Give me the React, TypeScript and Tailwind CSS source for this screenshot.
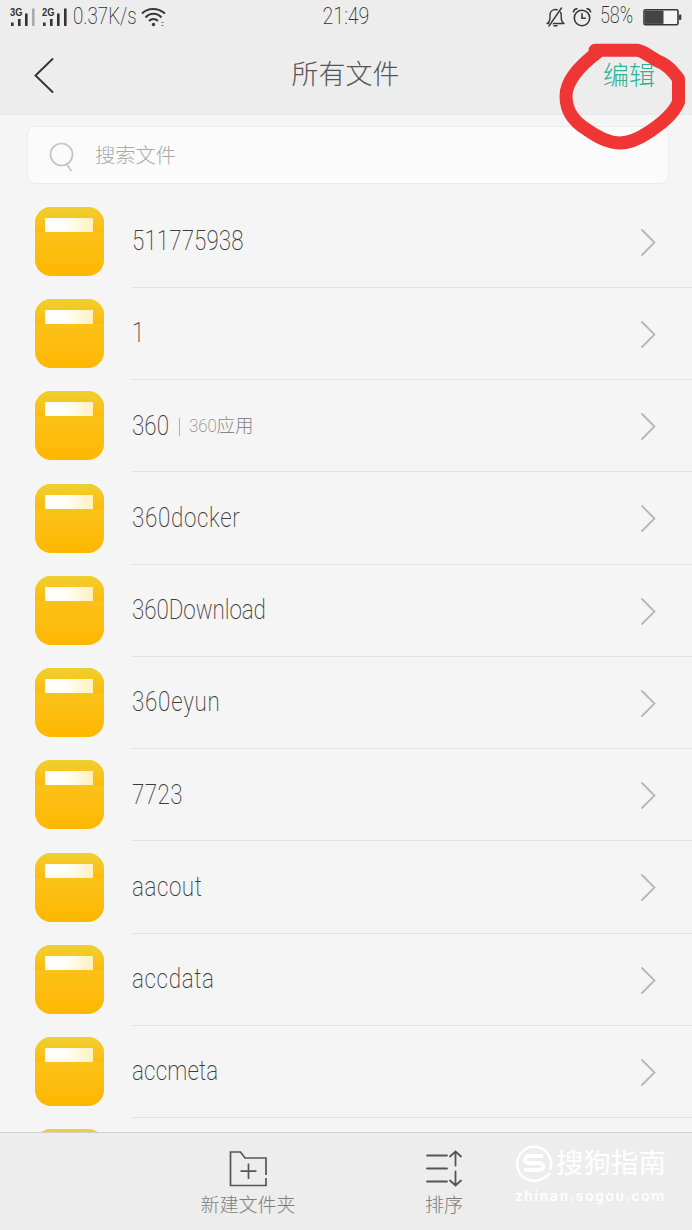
import { clsx } from 'clsx';

type FileEntry = {
  name: string;
  label?: string;
  spacing: string;
};

const files: FileEntry[] = [
  { name: '511775938', spacing: 'tracking-[0.100px]' },
  { name: '1', spacing: 'tracking-normal' },
  { name: '360', label: '360应用', spacing: 'tracking-normal' },
  { name: '360docker', spacing: 'tracking-[0.800px]' },
  { name: '360Download', spacing: 'tracking-[-0.100px]' },
  { name: '360eyun', spacing: 'tracking-[0.900px]' },
  { name: '7723', spacing: 'tracking-[0.500px]' },
  { name: 'aacout', spacing: 'tracking-[0.700px]' },
  { name: 'accdata', spacing: 'tracking-[0.800px]' },
  { name: 'accmeta', spacing: 'tracking-[0.200px]' },
];

function SignalBars({ label, weak }: { label: string; weak?: boolean }) {
  return (
    <svg width="26" height="20" viewBox="0 0 26 20" fill="#333">
      <text x="0" y="7.6" fontSize="10" fontWeight="700" fontFamily="Liberation Sans, sans-serif" textLength="12.5" lengthAdjust="spacingAndGlyphs">{label}</text>
      <rect x="1" y="14.5" width="2.6" height="3.5" />
      <rect x="8" y="11" width="2.6" height="7" />
      <rect x="15" y="5.5" width="2.6" height="12.5" />
      <rect x="22" y="0.5" width="2.6" height="17.5" fill={weak ? '#aaa' : '#333'} />
    </svg>
  );
}

function StatusBar() {
  return (
    <div className="flex h-[34px] items-start justify-between px-[10px] text-[#303030]">
      <div className="flex w-[220px] items-start pt-2">
        <SignalBars label="3G" weak />
        <span className="w-[6px]" />
        <SignalBars label="2G" />
        <span className="mt-[-5px] ml-[5px] w-[67px] origin-left scale-x-[0.815] whitespace-nowrap text-[23px] leading-7 font-extralight">0.37K/s</span>
        <svg className="ml-px" width="25" height="20" viewBox="0 0 25 20" fill="none" stroke="#383838" strokeWidth="2">
          <path d="M1 5.5C7-.5 17-.5 24 5.500M4.500 9.500C9 4.500 16 4.500 20.500 9.500M8 13C10.500 10.300 14.500 10.300 17 13" />
          <circle cx="12.5" cy="16.500" r="1.700" fill="#383838" stroke="none" />
          <path d="M20 14.500h3M20 17.500h3" strokeWidth="1" stroke="#999" />
        </svg>
      </div>
      <span className="w-[64px] origin-center scale-x-[0.85] text-center text-[23px] leading-[34px] font-extralight">21:49</span>
      <div className="flex w-[220px] items-start justify-end pt-[7px]">
        <svg width="19" height="20" viewBox="0 0 19 20" fill="none" stroke="#383838" strokeWidth="1.4" strokeLinecap="round" strokeLinejoin="round">
          <path d="M1 16.500h17c-2-1.300-2.800-3-2.800-6V8C15.200 4.500 12.500 2.500 9.500 2.500S4 4.500 4 8v2.500c0 3-.8 4.700-3 6Z" />
          <path d="M8 18.700h3" />
          <path d="M14.500 1.500 3.500 19" stroke="#ededed" strokeWidth="3" />
          <path d="M15.500 1 3 19" />
        </svg>
        <svg className="ml-[7px]" width="20" height="20" viewBox="0 0 20 20" fill="none" stroke="#383838" strokeWidth="1.6" strokeLinecap="round">
          <circle cx="10" cy="11" r="7.700" />
          <path d="M10 6.800V11.300h3.300M1.500 4.800Q2 2 5 1.800M18.500 4.800Q18 2 15 1.800" />
        </svg>
        <span className="mt-[-5px] ml-[8px] w-[35px] origin-left scale-x-[0.78] whitespace-nowrap text-[23px] leading-7 font-extralight">58%</span>
        <svg className="mt-[1px] ml-[8px]" width="39" height="18" viewBox="0 0 39 18">
          <rect x="1" y="1.700" width="34" height="15" rx="1.500" fill="#f5f5f5" stroke="#383838" strokeWidth="1.600" />
          <rect x="2" y="2.500" width="18.500" height="13.400" fill="#444" />
          <rect x="36" y="6.500" width="2.300" height="5.500" rx="1" fill="#383838" />
        </svg>
      </div>
    </div>
  );
}

function Header() {
  return (
    <header className="relative h-[115px] shrink-0 border-b border-[#e8e8e8] bg-[#ededed]">
      <StatusBar />
      <div className="flex h-[80px] items-center justify-between pr-[37px] pl-[34px]">
        <svg className="mt-[2px]" width="52" height="36" viewBox="0 0 52 36" fill="none" stroke="#333" strokeWidth="1.900" strokeLinecap="round">
          <path d="M18.500 2 1.500 18.500 18.500 35" />
        </svg>
        <h1 className="mt-[2px] ml-[2px] text-[27px] font-light text-[#555]">所有文件</h1>
        <button className="mt-[5px] text-[26px] font-extralight text-[#32b194]">编辑</button>
      </div>
      {/* hand-drawn marker around the edit button */}
      <svg className="pointer-events-none absolute top-0 left-0 z-10" width="692" height="160" viewBox="0 0 692 160" fill="none">
        <path d="M595 50.300H638C646 52 652 59 662 63C670 67 674 73 678.500 79V102C673 115 661 124 649 132C637 140 628 143 620 143C610 143 597 137 586 129C573 121 566 111 566 96C566 82 579 66 598 52" stroke="#f03535" strokeWidth="13" strokeLinecap="round" strokeLinejoin="round" />
      </svg>
    </header>
  );
}

function SearchBox() {
  return (
    <div className="mt-[11px] mr-[23px] ml-[27px] flex h-[58px] shrink-0 items-center rounded-lg border border-[#ebebeb] bg-[#fbfbfb] pl-[21px]">
      <svg className="mt-[3px]" width="26" height="30" viewBox="0 0 26 30" fill="none" stroke="#c4c4c4" strokeWidth="1.700" strokeLinecap="round">
        <circle cx="12.500" cy="12.500" r="11" />
        <path d="m17.500 22 4.500 6.500" />
      </svg>
      <span className="ml-[20px] pt-[2px] text-[20.300px] font-extralight text-[#aaa]">搜索文件</span>
    </div>
  );
}

function FolderIcon() {
  return (
    <div className="h-[69px] w-[69px] shrink-0 overflow-hidden rounded-[16px] bg-linear-to-b from-[#f8c820] to-[#ffb700]">
      <div className="flex h-[25px] items-end justify-center bg-linear-to-b from-[#efd02f] to-[#ffb908]">
        <div className="mr-px h-[14px] w-[48px] bg-linear-to-r from-white via-[#fffdf2] to-[#fff0bd]" />
      </div>
    </div>
  );
}

function FileRow({ file }: { file: FileEntry }) {
  return (
    <li className="flex h-[92.250px] shrink-0 pl-[35px]">
      <div className="mt-[11.400px]">
        <FolderIcon />
      </div>
      <div className="ml-[28px] flex flex-1 items-center justify-between border-b border-[#e1e1e1] pr-[36px]">
        <div className="flex items-center">
          <span className={clsx('inline-block origin-left scale-x-[0.8] whitespace-nowrap text-[28px] leading-8 font-extralight text-[#3c3c3c]', file.spacing, file.label && 'w-[38px]')}>{file.name}</span>
          {file.label && (
            <>
              <span className="mt-[2px] ml-[9px] h-[18px] w-px bg-[#b0b0b0]" />
              <span className="mt-[2px] ml-[9px] flex items-center text-[18.500px] font-extralight text-[#888]">
                <span className="w-[27.500px] origin-left scale-x-[0.89] text-[19px]">360</span>应用
              </span>
            </>
          )}
        </div>
        <svg className="mt-px" width="16" height="28" viewBox="0 0 16 28" fill="none" stroke="#b6b6b6" strokeWidth="1.800" strokeLinecap="round">
          <path d="M2 2l12.500 12.500L2 27" />
        </svg>
      </div>
    </li>
  );
}

function Toolbar() {
  return (
    <footer className="flex h-[98px] shrink-0 border-t border-[#cfcfcf] bg-[#ededed] text-[19px] font-extralight text-[#7c7c7c]">
      <div className="ml-[148px] flex w-[200px] flex-col items-center pt-[17px]">
        <svg width="38" height="37" viewBox="0 0 38 37" fill="none" stroke="#555" strokeWidth="1.700">
          <path d="M37 25V8H16L11.500 2H1.500V35.500H37V28M19.500 13.500V29M11.500 21.200H27.500" />
        </svg>
        <span className="mt-[5px] leading-7">新建文件夹</span>
      </div>
      <div className="ml-[46px] flex w-[100px] flex-col items-center pt-[17px]">
        <svg className="-ml-[2px]" width="37" height="37" viewBox="0 0 37 37" fill="none" stroke="#555" strokeWidth="1.800" strokeLinecap="round">
          <path d="M2 5.500H22M2 18.500H22M2 31.500H22M30.500 15.500V2M25 6.500 30.500 1.500 36 6.500M30.500 21.500V35M25 30.500 30.500 35.500 36 30.500" />
        </svg>
        <span className="mt-[5px] leading-7">排序</span>
      </div>
      <div className="ml-[21px] pt-[11px] text-white">
        <div className="flex h-[38px] items-center">
          <svg width="38" height="38" viewBox="0 0 38 38" fill="none" stroke="#fff">
            <path d="M31 32A17 17 0 1 1 35 26" strokeWidth="2.500" />
            <path d="M28 12H15Q10 12 10 15.500T15 19H23Q28 19 28 22.500T23 26H9" strokeWidth="4" />
            <path d="m30 34 5-5" strokeWidth="3" />
          </svg>
          <span className="mt-[2px] ml-[3px] text-[27.500px] font-normal">搜狗指南</span>
        </div>
        <div className="mt-[4px] text-[15px] leading-5 font-medium tracking-[1.700px]">zhinan.sogou.com</div>
      </div>
    </footer>
  );
}

export default function App() {
  return (
    <div className="flex h-[1230px] w-[692px] flex-col overflow-hidden bg-[#f5f5f5] font-[Roboto,'Noto_Sans_CJK_SC',sans-serif]">
      <Header />
      <SearchBox />
      <ul className="mt-[11.500px] flex min-h-0 flex-1 flex-col overflow-hidden">
        {files.map((file) => (
          <FileRow key={file.name} file={file} />
        ))}
        {/* next folder, cut off by the toolbar */}
        <li className="shrink-0 pt-[11.400px] pl-[35px]">
          <FolderIcon />
        </li>
      </ul>
      <Toolbar />
    </div>
  );
}
